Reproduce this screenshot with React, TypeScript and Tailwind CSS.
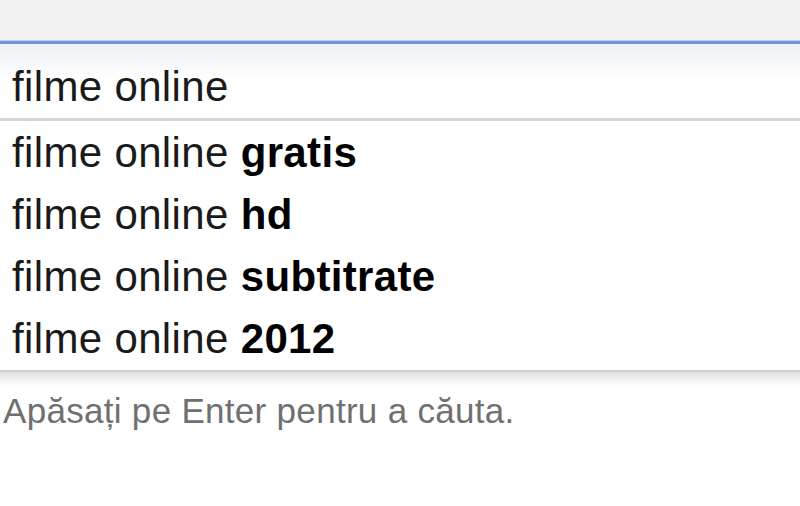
import React from 'react';

const suggestions = ['gratis', 'hd', 'subtitrate', '2012'];

const App: React.FC = () => {
  return (
    <div className="w-[800px] h-[506px] bg-white overflow-hidden font-['Liberation_Sans',Arial,sans-serif]">
      {/* top toolbar strip */}
      <div className="h-[36px] bg-[#f1f1f1]" />
      <div className="h-[4px] bg-[#f4f0ec]" />
      <div className="h-[1px] bg-[#b9d6f5]" />
      <div className="h-[3px] bg-[#7095d8]" />

      {/* search input */}
      <div className="bg-gradient-to-b from-[#eef0f5] via-white to-white h-[74px] pt-[19px] pl-[12px] text-[42px] leading-[47px] tracking-[0.35px] text-[#1a1a1a]">
        filme online
      </div>

      {/* suggestions */}
      <div className="pt-[1px] border-t-[3px] border-[#d6d6d6] border-b-[2px] border-b-[#d0d0d0]">
        {suggestions.map((s) => (
          <div key={s} className="h-[62px] pl-[12px] text-[42px] leading-[62px] tracking-[0.35px] text-[#1a1a1a] whitespace-nowrap">
            filme online <span className="font-bold text-black">{s}</span>
          </div>
        ))}
      </div>
      <div className="h-[14px] bg-gradient-to-b from-[#e2e2e2] to-white" />

      <div className="mt-[5px] pl-[3px] text-[35px] leading-[40px] tracking-[0.3px] text-[#707070] whitespace-nowrap">
        Apăsați pe Enter pentru a căuta.
      </div>
    </div>
  );
};

export default App;
